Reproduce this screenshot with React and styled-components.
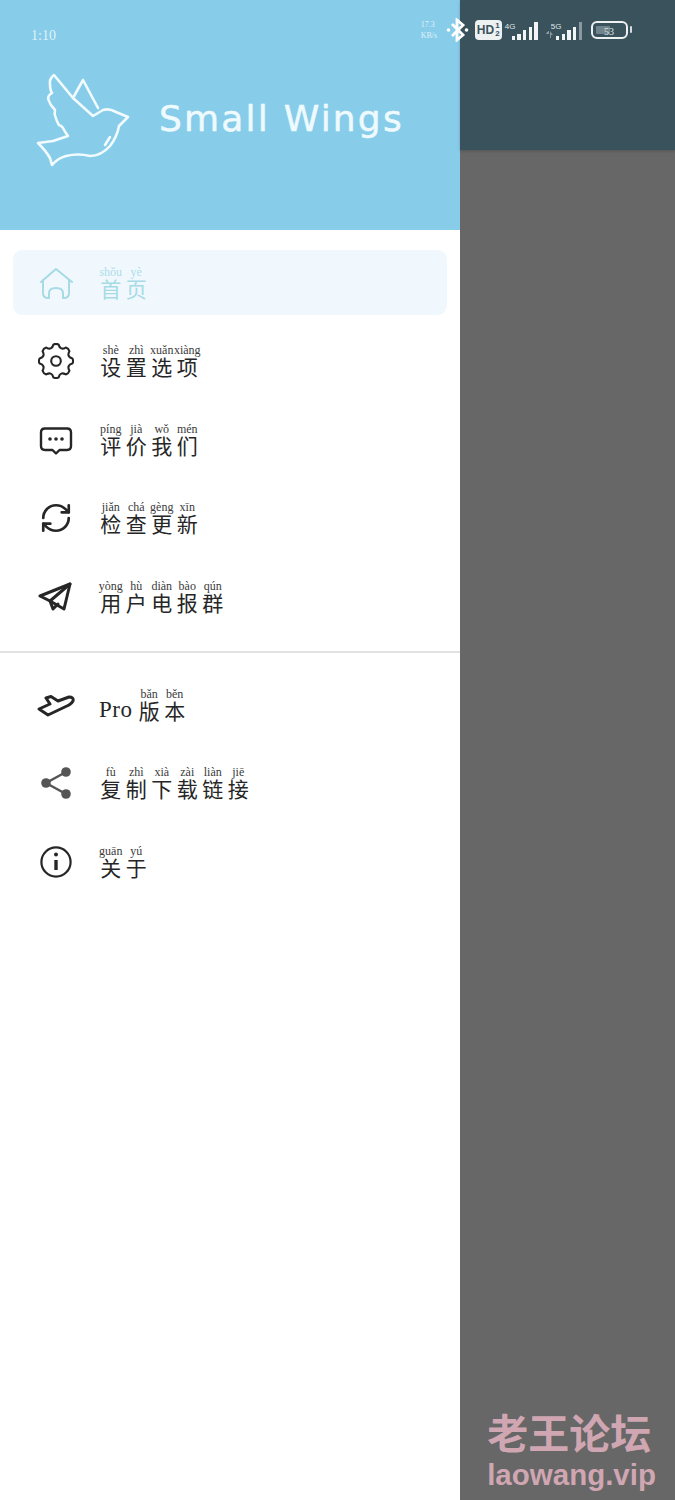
import React from 'react';
import styled, { createGlobalStyle } from 'styled-components';
import { RefreshCw } from 'lucide-react';

const GlobalStyle = createGlobalStyle`
  html, body {
    margin: 0;
    padding: 0;
    background: #fff;
  }
`;

const Page = styled.div`
  position: relative;
  display: flex;
  width: 675px;
  height: 1500px;
  overflow: hidden;
`;

const Drawer = styled.aside`
  display: flex;
  flex-direction: column;
  width: 460px;
  flex: none;
  background: #fff;
`;

const Scrim = styled.div`
  flex: 1;
  display: flex;
  flex-direction: column;
  background: #666766;
`;

const ScrimBar = styled.div`
  height: 150px;
  background: #3a525c;
  box-shadow: 0 1px 3px rgba(0, 0, 0, 0.2);
`;

const Header = styled.header`
  display: flex;
  align-items: flex-start;
  height: 230px;
  padding: 72px 0 0 36px;
  box-sizing: border-box;
  background: #87cdea;
`;

const Title = styled.h1`
  margin: 24px 0 0 27px;
  font-family: "DejaVu Sans", sans-serif;
  font-size: 36px;
  line-height: 46px;
  font-weight: 400;
  letter-spacing: 2.2px;
  white-space: nowrap;
  color: #effafe;
  -webkit-text-stroke: 0.5px #effafe;
`;

const Menu = styled.nav`
  display: flex;
  flex-direction: column;
  gap: 13.5px;
  padding: ${(p) => (p.$first ? '20px 13px 22px' : '19px 13px 0')};
  border-bottom: ${(p) => (p.$first ? '2px solid #e2e2e2' : 'none')};
`;

const Row = styled.div`
  display: flex;
  align-items: center;
  height: 65px;
  padding-left: 13px;
  border-radius: 9px;
  background: ${(p) => (p.$active ? '#f0f8fe' : 'transparent')};
  color: ${(p) => (p.$active ? '#a6dbe6' : '#262626')};
`;

const IconBox = styled.div`
  display: flex;
  align-items: center;
  justify-content: center;
  width: 60px;
  height: 40px;
  flex: none;
  color: #262626;
`;

const Label = styled.div`
  display: flex;
  align-items: flex-end;
  margin-left: 12px;
`;

const Cell = styled.span`
  display: flex;
  flex-direction: column;
  align-items: center;
  width: 25.5px;
  white-space: nowrap;
`;

const Pinyin = styled.span`
  font-family: "Liberation Serif", serif;
  font-size: 12px;
  line-height: 11px;
  opacity: 0.9;
`;

const Hanzi = styled.span`
  font-family: "Noto Sans CJK SC", sans-serif;
  font-size: 21px;
  line-height: 21px;
`;

const Latin = styled.span`
  margin: 0 4px 0 1px;
  font-family: "Liberation Serif", serif;
  font-size: 23px;
  line-height: 22px;
  letter-spacing: 0.5px;
`;

const StatusBar = styled.div`
  position: absolute;
  top: 0;
  left: 0;
  right: 0;
  display: flex;
  align-items: center;
  justify-content: space-between;
  height: 60px;
  padding: 0 47px 0 31px;
  box-sizing: border-box;
`;

const Time = styled.span`
  margin-top: 11px;
  font-family: "Liberation Serif", serif;
  font-size: 14px;
  color: rgba(255, 255, 255, 0.75);
`;

const StatusRight = styled.div`
  display: flex;
  align-items: center;
  height: 24px;
`;

const Speed = styled.span`
  width: 25px;
  font-family: "Liberation Serif", serif;
  font-size: 8px;
  line-height: 11px;
  color: rgba(255, 255, 255, 0.75);
`;

const HdPill = styled.span`
  display: flex;
  align-items: center;
  justify-content: center;
  width: 27px;
  height: 20px;
  margin: 0 10px 0 6px;
  border-radius: 4px;
  background: #eef1f2;
  color: #3a525c;
  font-family: "Liberation Sans", sans-serif;
  font-size: 12px;
  font-weight: 700;
`;

const Fraction = styled.span`
  display: flex;
  flex-direction: column;
  margin-left: 1px;
  font-size: 8px;
  line-height: 8px;
`;

const Signal = styled.div`
  position: relative;
  display: flex;
  align-items: flex-end;
  gap: 2.3px;
  height: 18px;
  margin: 2px 0 0 ${(p) => p.$gap || 0}px;
`;

const Bar = styled.span`
  width: 3.4px;
  height: ${(p) => p.$h}px;
  background: ${(p) => (p.$dim ? '#8a999f' : '#f2f5f6')};
`;

const NetLabel = styled.span`
  position: absolute;
  top: 1px;
  left: ${(p) => p.$left}px;
  font-family: "Liberation Sans", sans-serif;
  font-size: 8px;
  line-height: 8px;
  color: #dfe6e8;
`;

const DataArrows = styled.svg`
  position: absolute;
  left: -10px;
  bottom: 2px;
`;

const Battery = styled.div`
  position: relative;
  display: flex;
  width: 37px;
  height: 18px;
  margin-left: 9px;
  box-sizing: border-box;
  padding: 3px;
  border: 2px solid #eef1f2;
  border-radius: 6px;

  &::after {
    content: '';
    position: absolute;
    top: 3px;
    right: -6px;
    width: 2px;
    height: 7px;
    border-radius: 1px;
    background: #d5dcdf;
  }
`;

const BatteryLevel = styled.span`
  height: 100%;
  border-radius: 1px;
  background: #71848b;
`;

const BatteryText = styled.span`
  position: absolute;
  left: 11px;
  top: 2px;
  font-family: "Liberation Serif", serif;
  font-size: 10px;
  line-height: 14px;
  color: #dfe6e8;
`;

const Watermark = styled.div`
  position: absolute;
  right: 19px;
  bottom: 6px;
  display: flex;
  flex-direction: column;
  align-items: flex-start;
  color: #cfa6b1;
  font-weight: 700;
`;

const WatermarkCn = styled.span`
  font-family: "Noto Sans CJK SC", sans-serif;
  font-size: 41px;
  line-height: 50px;
`;

const WatermarkEn = styled.span`
  font-family: "Liberation Sans", sans-serif;
  font-size: 29.5px;
  line-height: 38px;
`;

const BirdIcon = () => (
  <svg width="96" height="96" viewBox="36 72 96 96" fill="none" stroke="#f2fbff" strokeWidth="2.6" strokeLinejoin="round" strokeLinecap="round">
    <path d="M128 117 L116 112 Q109 108 103 110 L93 116 L73 98 L54 75 Q49 79 50 84 Q50 90 52 93 Q47 96 48.5 100 Q50 105 55 110 Q54 114 55.5 117 Q57 122 59 125 Q62 126 63 128 Q65 132 68 136 L53 141 L38 143 Q46 151 50 158 L52 165 Q58 158 66 156 Q78 153 90 156 Q101 156 110 146 Q117 137 119 126 Z" />
    <path d="M73 98 L83 80 L98 108" />
    <path d="M105 145 L110 137" />
  </svg>
);

const HomeIcon = () => (
  <svg width="36" height="36" viewBox="38 264 36 36" fill="none" stroke="#a6dbe6" strokeWidth="2" strokeLinejoin="round" strokeLinecap="round">
    <path d="M41 281 L56 268 L72 281" />
    <path d="M43 279 V292 Q43 297 48 297 H49 V292 Q49 287 56 287 Q63 287 63 292 V297 H64 Q69 297 69 292 V279" />
  </svg>
);

const polar = (r, deg) => {
  const a = ((deg - 90) * Math.PI) / 180;
  return `${(18 + r * Math.cos(a)).toFixed(2)} ${(18 + r * Math.sin(a)).toFixed(2)}`;
};

// 8 rounded teeth joined by shallow curves
const gearPath = Array.from({ length: 8 }, (_, i) => {
  const a = i * 45;
  const start = i === 0 ? `M${polar(16.6, a - 9)}` : '';
  return `${start} Q${polar(17.8, a)} ${polar(16.6, a + 9)} Q${polar(11.2, a + 22.5)} ${polar(16.6, a + 36)}`;
}).join(' ');

const GearIcon = () => (
  <svg width="36" height="36" viewBox="0 0 36 36" fill="none" stroke="#262626" strokeWidth="2.1" strokeLinejoin="round">
    <path d={`${gearPath} Z`} />
    <circle cx="18" cy="18" r="4.8" />
  </svg>
);

const MessageIcon = () => (
  <svg width="34" height="32" viewBox="39 424 34 32" fill="none" stroke="#262626" strokeWidth="2.4" strokeLinejoin="round">
    <path d="M45 428.5 H67 Q71 428.5 71 432.5 V446 Q71 450 67 450 H59.5 L56 453.5 L52.5 450 H45 Q41 450 41 446 V432.5 Q41 428.5 45 428.5 Z" />
    <circle cx="50" cy="439" r="1.8" fill="#262626" stroke="none" />
    <circle cx="56" cy="439" r="1.8" fill="#262626" stroke="none" />
    <circle cx="62" cy="439" r="1.8" fill="#262626" stroke="none" />
  </svg>
);

const TelegramIcon = () => (
  <svg width="36" height="32" viewBox="38 581 36 32" fill="none" stroke="#262626" strokeWidth="3" strokeLinejoin="round" strokeLinecap="round">
    <path d="M40 596 L70 584 L64 609 L50 601 Z" />
    <path d="M70 584 L50 601 L53 609 L58 604" />
  </svg>
);

const PlaneIcon = () => (
  <svg width="38" height="24" viewBox="37 691 38 24" fill="none" stroke="#262626" strokeWidth="3" strokeLinejoin="round">
    <path d="M39 707 L50 702 L46 696 L51 694.5 L58 699 L69 695 Q74 695 73 699 Q72 701 69 703 L48 713 Z" />
  </svg>
);

const ShareIcon = () => (
  <svg width="36" height="36" viewBox="38 765 36 36" fill="#555" stroke="#555">
    <path d="M66 772 L46 783 L66 794" fill="none" strokeWidth="2.4" />
    <circle cx="66" cy="772" r="4.8" stroke="none" />
    <circle cx="46" cy="783" r="4.8" stroke="none" />
    <circle cx="66" cy="794" r="4.8" stroke="none" />
  </svg>
);

const InfoIcon = () => (
  <svg width="34" height="34" viewBox="39 844 34 34" fill="none" stroke="#262626" strokeWidth="2.2">
    <circle cx="56" cy="861" r="14.6" />
    <path d="M56 859 V869" strokeWidth="3.4" />
    <circle cx="56" cy="853.5" r="2" fill="#262626" stroke="none" />
  </svg>
);

const BluetoothIcon = () => (
  <svg width="23" height="24" viewBox="444 19 23 24" fill="none" stroke="#fff" strokeWidth="2.8" strokeLinejoin="miter">
    <path d="M450 25 L461 36 L455 41 V21 L461 26 L450 37" />
    <circle cx="446.5" cy="31" r="1.8" fill="#fff" stroke="none" />
    <circle cx="464.5" cy="31" r="1.8" fill="#fff" stroke="none" />
  </svg>
);

const Word = ({ pairs }) => (
  <>
    {pairs.map(([py, zh]) => (
      <Cell key={zh}>
        <Pinyin>{py}</Pinyin>
        <Hanzi>{zh}</Hanzi>
      </Cell>
    ))}
  </>
);

const topItems = [
  { icon: <HomeIcon />, active: true, pairs: [['shǒu', '首'], ['yè', '页']] },
  { icon: <GearIcon />, pairs: [['shè', '设'], ['zhì', '置'], ['xuǎn', '选'], ['xiàng', '项']] },
  { icon: <MessageIcon />, pairs: [['píng', '评'], ['jià', '价'], ['wǒ', '我'], ['mén', '们']] },
  { icon: <RefreshCw size={34} strokeWidth={1.9} />, pairs: [['jiǎn', '检'], ['chá', '查'], ['gèng', '更'], ['xīn', '新']] },
  { icon: <TelegramIcon />, pairs: [['yòng', '用'], ['hù', '户'], ['diàn', '电'], ['bào', '报'], ['qún', '群']] },
];

const bottomItems = [
  { icon: <PlaneIcon />, latin: 'Pro', pairs: [['bǎn', '版'], ['běn', '本']] },
  { icon: <ShareIcon />, pairs: [['fù', '复'], ['zhì', '制'], ['xià', '下'], ['zài', '载'], ['liàn', '链'], ['jiē', '接']] },
  { icon: <InfoIcon />, pairs: [['guān', '关'], ['yú', '于']] },
];

const MenuRow = ({ item }) => (
  <Row $active={item.active}>
    <IconBox>{item.icon}</IconBox>
    <Label>
      {item.latin && <Latin>{item.latin}</Latin>}
      <Word pairs={item.pairs} />
    </Label>
  </Row>
);

const App = () => {
  return (
    <Page>
      <GlobalStyle />
      <Drawer>
        <Header>
          <BirdIcon />
          <Title>Small Wings</Title>
        </Header>
        <Menu $first>
          {topItems.map((item) => <MenuRow key={item.pairs[0][1]} item={item} />)}
        </Menu>
        <Menu>
          {bottomItems.map((item) => <MenuRow key={item.pairs[0][1]} item={item} />)}
        </Menu>
      </Drawer>
      <Scrim>
        <ScrimBar />
      </Scrim>
      <StatusBar>
        <Time>1:10</Time>
        <StatusRight>
          <Speed>17.3<br />KB/s</Speed>
          <BluetoothIcon />
          <HdPill>
            HD
            <Fraction><span>1</span><span>2</span></Fraction>
          </HdPill>
          <Signal>
            <NetLabel $left={-7}>4G</NetLabel>
            {[4, 6, 10, 13, 18].map((h) => <Bar key={h} $h={h} />)}
          </Signal>
          <Signal $gap={18}>
            <NetLabel $left={-5}>5G</NetLabel>
            <DataArrows width="8" height="7" viewBox="0 0 8 7" fill="#8a999f">
              <path d="M0 3 H3 V0 H2 V1 H1 Z M4 0 L7 4 H5 V7 H4 Z" />
            </DataArrows>
            {[4, 6, 10, 13].map((h) => <Bar key={h} $h={h} />)}
            <Bar $h={18} $dim />
          </Signal>
          <Battery>
            <BatteryLevel style={{ width: '53%' }} />
            <BatteryText>53</BatteryText>
          </Battery>
        </StatusRight>
      </StatusBar>
      <Watermark>
        <WatermarkCn>老王论坛</WatermarkCn>
        <WatermarkEn>laowang.vip</WatermarkEn>
      </Watermark>
    </Page>
  );
};

export default App;
